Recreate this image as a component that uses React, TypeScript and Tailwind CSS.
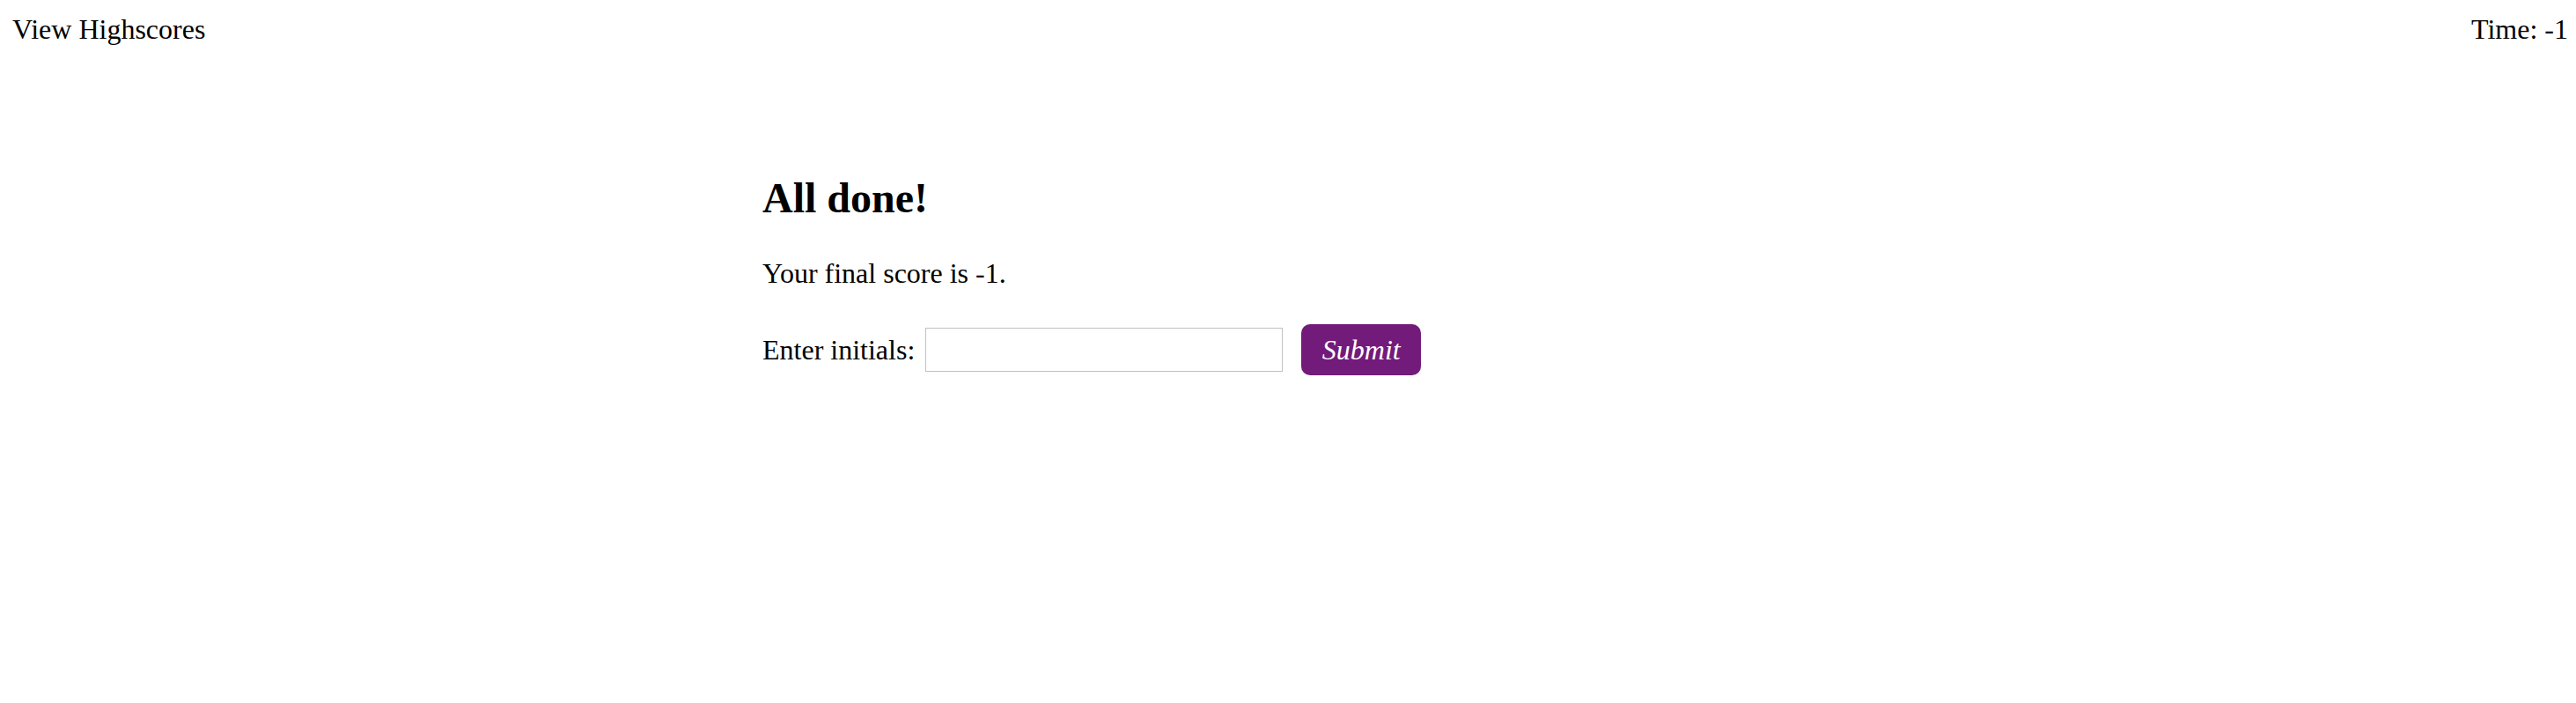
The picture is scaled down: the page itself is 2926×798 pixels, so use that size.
export default function App() {
  return (
    <div className="min-h-screen bg-white text-black font-['Liberation_Serif','Times_New_Roman',serif]">
      {/* top bar */}
      <header className="flex justify-between pl-[14px] pr-[9px] pt-[16px] text-[32px] leading-[35px]">
        <a href="#">View Highscores</a>
        <span>Time: -1</span>
      </header>

      <main className="mx-auto w-[1194px] pt-[147px]">
        <h1 className="text-[48px] leading-[53px] font-bold">All done!</h1>
        <p className="mt-[42px] text-[32px] leading-[35px]">Your final score is -1.</p>

        <form className="mt-[40px] flex items-center" onSubmit={(e) => e.preventDefault()}>
          <label htmlFor="initials" className="text-[32px] leading-[35px]">
            Enter initials:
          </label>
          <input
            id="initials"
            type="text"
            className="ml-[12px] h-[50px] w-[406px] border border-[#c0c0c0] bg-white px-2 text-[28px] outline-none"
          />
          <button
            type="submit"
            className="ml-[21px] flex h-[58px] w-[136px] items-center justify-center rounded-[10px] bg-[#731b7b] text-[32px] italic leading-none text-white"
          >
            Submit
          </button>
        </form>
      </main>
    </div>
  );
}
